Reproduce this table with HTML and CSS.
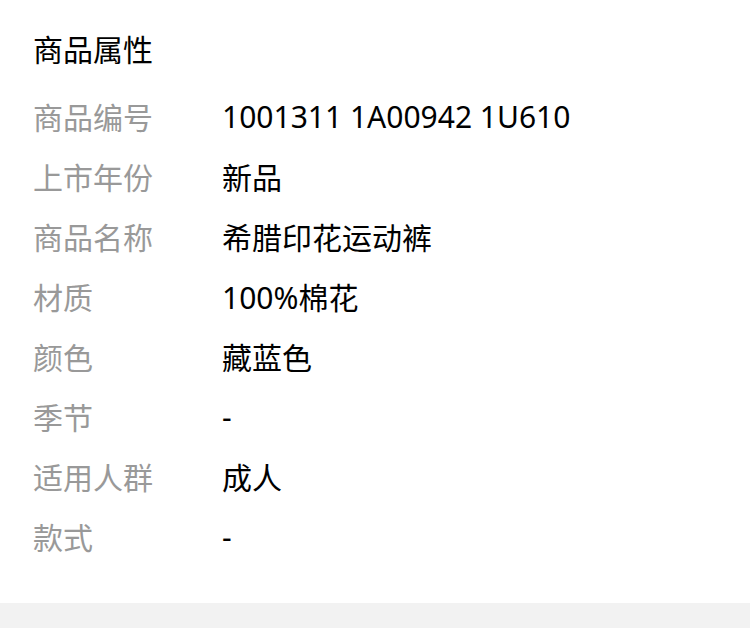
FILE: index.html
```html
<!DOCTYPE html>
<html lang="zh-CN">
<head>
  <meta charset="UTF-8">
  <meta name="viewport" content="width=device-width, initial-scale=1.0">
  <title>商品属性</title>
  <link rel="stylesheet" href="styles.css">
</head>
<body>

<div class="panel">
  <h2 class="title">商品属性</h2>
  <div class="attrs">
    <div class="row"><span class="label">商品编号</span><span class="value">1001311 1A00942 1U610</span></div>
    <div class="row"><span class="label">上市年份</span><span class="value">新品</span></div>
    <div class="row"><span class="label">商品名称</span><span class="value">希腊印花运动裤</span></div>
    <div class="row"><span class="label">材质</span><span class="value">100%棉花</span></div>
    <div class="row"><span class="label">颜色</span><span class="value">藏蓝色</span></div>
    <div class="row"><span class="label">季节</span><span class="value">-</span></div>
    <div class="row"><span class="label">适用人群</span><span class="value">成人</span></div>
    <div class="row"><span class="label">款式</span><span class="value">-</span></div>
  </div>
</div>
<div class="footer-bar"></div>

</body>
</html>
```

FILE: styles.css
```css
body {
  margin: 0;
  background: #fff;
  font-family: "Noto Sans", "Noto Sans CJK SC", sans-serif;
  color: #000;
}

.panel {
  padding: 28px 33px 0;
  height: 603px;
  box-sizing: border-box;
}

.title {
  margin: 0;
  font-size: 30px;
  font-weight: normal;
  line-height: 44px;
}

.attrs {
  margin-top: 14px;
}

.row {
  display: flex;
  height: 60px;
  align-items: center;
  font-size: 30px;
}

.label {
  width: 189px;
  color: #999;
}

.value {
  color: #000;
}

.footer-bar {
  height: 25px;
  background: #f2f2f2;
}
```
